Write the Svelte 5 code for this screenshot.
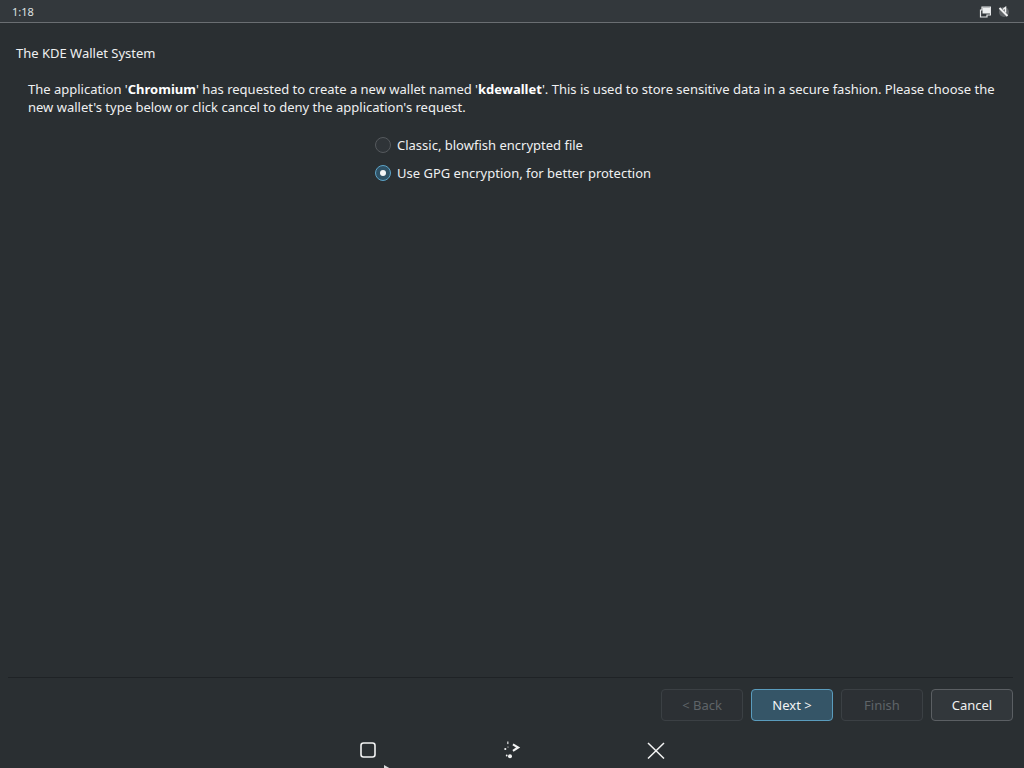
<script>
  const options = [
    { label: 'Classic, blowfish encrypted file', checked: false },
    { label: 'Use GPG encryption, for better protection', checked: true }
  ];
</script>

<div class="screen">
  <header class="status">
    <span class="time">1:18</span>
    <div class="tray">
      <svg width="12" height="12" viewBox="0 0 12 12"><path d="M3 1h8.5v8H8v2H1.5V4H3z" fill="none" stroke="#e4e6e7" stroke-width="1.2"/><path d="M3.5 1.5h7.5v6H3.5z" fill="#eceeef"/></svg>
      <svg width="12" height="12" viewBox="0 0 12 12"><circle cx="6" cy="6" r="5" fill="#5f6367"/><path d="M1.5 2 9.5 10" stroke="#f0f1f2" stroke-width="2"/><path d="M5 3.5 7.5 1.5v5" stroke="#f0f1f2" stroke-width="1.5" fill="none"/></svg>
    </div>
  </header>

  <main class="page">
    <h1>The KDE Wallet System</h1>
    <p>The application '<b>Chromium</b>' has requested to create a new wallet named '<b>kdewallet</b>'. This is used to store sensitive data in a secure fashion. Please choose the new wallet's type below or click cancel to deny the application's request.</p>
    <div class="options">
      {#each options as o}
        <div class="option">
          <span class="radio" class:on={o.checked}></span>
          <span>{o.label}</span>
        </div>
      {/each}
    </div>
  </main>

  <div class="rule"></div>

  <footer class="buttons">
    <button disabled>&lt; Back</button>
    <button class="primary">Next &gt;</button>
    <button disabled>Finish</button>
    <button class="cancel">Cancel</button>
  </footer>

  <nav class="nav">
    <svg width="18" height="18" viewBox="0 0 18 18"><rect x="2" y="2" width="14" height="14" rx="2.5" fill="none" stroke="#f2f3f3" stroke-width="1.6"/></svg>
    <svg width="18" height="18" viewBox="0 0 18 18" fill="#f2f3f3"><path d="M10.5 2.4 17.2 6.6 10.5 10.8 9.4 8.9 13 6.6 9.4 4.3z"/><circle cx="2.3" cy="8" r="1.1"/><circle cx="5" cy="6" r=".6"/><rect x="4.3" y=".5" width="1.1" height="2.6"/><circle cx="7" cy="15.2" r="2"/><circle cx="3.7" cy="14.5" r=".9"/></svg>
    <svg width="18" height="18" viewBox="0 0 18 18"><path d="M1 2 17 17.5M17 2 1 17.5" stroke="#f2f3f3" stroke-width="1.5"/></svg>
  </nav>
  <svg class="pointer" width="8" height="4" viewBox="0 0 8 4"><path d="M0 0 7 4H0z" fill="#d8dadb"/></svg>
</div>

<style>
  :global(body) { margin: 0; background: #2a2f32; }
  .screen {
    position: relative;
    width: 1024px;
    height: 768px;
    overflow: hidden;
    display: flex;
    flex-direction: column;
    background: #2a2f32;
    color: #eff0f1;
    font: 13px/18px "Noto Sans", sans-serif;
  }
  .status {
    height: 23px;
    flex: none;
    box-sizing: border-box;
    border-bottom: 1px solid #6a6e72;
    background: #33383c;
    display: flex;
    align-items: center;
    justify-content: space-between;
    padding: 1px 14px 0 12px;
    font-size: 11px;
    color: #dfe1e2;
  }
  .tray { display: flex; gap: 7px; }
  .page { flex: 1; padding: 21px 16px 0; min-height: 0; }
  h1 { margin: 0; font: inherit; }
  p { margin: 18px 12px 0; }
  b { font-weight: 700; color: #fff; }
  .options {
    margin: 20px 0 0 359px;
    display: flex;
    flex-direction: column;
    gap: 10px;
  }
  .option { display: flex; align-items: center; gap: 6px; height: 18px; }
  .radio {
    width: 16px;
    height: 16px;
    box-sizing: border-box;
    border: 1px solid #55595d;
    border-radius: 50%;
    background: #2f3438;
    display: grid;
    place-items: center;
  }
  .radio.on { border-color: #5da4c8; background: #2f5266; }
  .radio.on::after {
    content: "";
    width: 6px;
    height: 6px;
    border-radius: 50%;
    background: #f4f6f7;
  }
  .rule {
    flex: none;
    height: 1px;
    margin: 0 11px 0 8px;
    background: #1f2326;
  }
  .buttons {
    flex: none;
    display: flex;
    justify-content: flex-end;
    gap: 8px;
    padding: 11px 11px 0 0;
    height: 39px;
  }
  button {
    width: 82px;
    height: 32px;
    box-sizing: border-box;
    padding: 0;
    font: inherit;
    border: 1px solid #3b4044;
    border-radius: 4px;
    background: #2c3034;
    color: #5f6468;
  }
  .primary { border-color: #5a9cbd; background: #355567; color: #f2f4f5; }
  .cancel { border-color: #5b5f63; background: #32373b; color: #eff0f1; }
  .nav {
    flex: none;
    height: 40px;
    box-sizing: border-box;
    display: flex;
    justify-content: center;
    align-items: flex-start;
    gap: 126px;
    padding-top: 13px;
  }
  .pointer {
    position: absolute;
    left: 384px;
    top: 765px;
  }
</style>
